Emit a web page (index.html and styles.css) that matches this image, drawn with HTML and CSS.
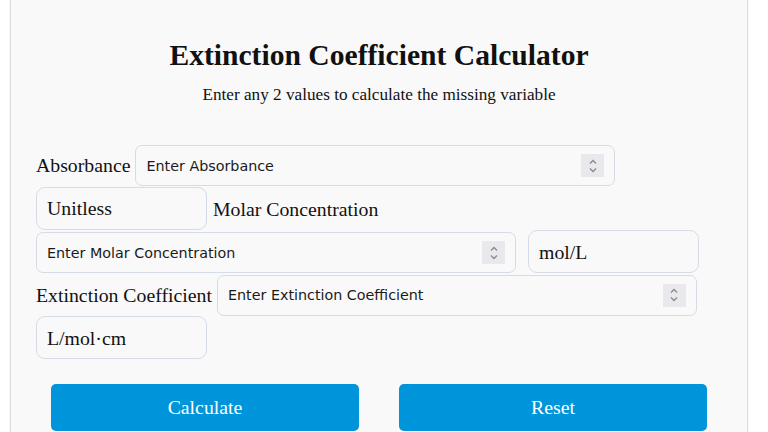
FILE: index.html
```html
<!DOCTYPE html>
<html lang="en">
<head>
  <meta charset="UTF-8">
  <meta name="viewport" content="width=device-width, initial-scale=1.0">
  <title>Extinction Coefficient Calculator</title>
  <link rel="stylesheet" href="styles.css">
</head>
<body>
  <div class="container">
    <h1>Extinction Coefficient Calculator</h1>
    <p class="description">Enter any 2 values to calculate the missing variable</p>

    <div class="form">
      <label for="absorbance">Absorbance</label>
      <span class="field">
        <input type="text" id="absorbance" placeholder="Enter Absorbance">
        <span class="spin">
          <svg width="10" height="16" viewBox="0 0 10 16"><path d="M2 5.5 5 2.5 8 5.5M2 10.5 5 13.5 8 10.5" fill="none" stroke="#8a8a8a" stroke-width="1.3"/></svg>
        </span>
      </span>
      <select class="unit"><option>Unitless</option></select>

      <label for="concentration">Molar Concentration</label>
      <span class="field">
        <input type="text" id="concentration" placeholder="Enter Molar Concentration">
        <span class="spin">
          <svg width="10" height="16" viewBox="0 0 10 16"><path d="M2 5.5 5 2.5 8 5.5M2 10.5 5 13.5 8 10.5" fill="none" stroke="#8a8a8a" stroke-width="1.3"/></svg>
        </span>
      </span>
      <select class="unit unit-wide"><option>mol/L</option></select>

      <label for="coefficient">Extinction Coefficient</label>
      <span class="field">
        <input type="text" id="coefficient" placeholder="Enter Extinction Coefficient">
        <span class="spin">
          <svg width="10" height="16" viewBox="0 0 10 16"><path d="M2 5.5 5 2.5 8 5.5M2 10.5 5 13.5 8 10.5" fill="none" stroke="#8a8a8a" stroke-width="1.3"/></svg>
        </span>
      </span>
      <select class="unit"><option>L/mol·cm</option></select>
    </div>

    <div class="buttons">
      <button class="btn">Calculate</button>
      <button class="btn">Reset</button>
    </div>
  </div>
</body>
</html>
```

FILE: styles.css
```css
:root {
  --card-bg: #f9f9f9;
  --border-color: #d5dce6;
  --accent-blue: #0094da;
  --text-color: #111111;
}

* {
  margin: 0;
  padding: 0;
  box-sizing: border-box;
}

body {
  font-family: 'Liberation Serif', 'Times New Roman', serif;
  background-color: #ffffff;
  color: var(--text-color);
}

.container {
  width: 738px;
  margin-left: 10px;
  min-height: 460px;
  background-color: var(--card-bg);
  border: 1px solid #dcdcdc;
  border-top: none;
  box-shadow: 0 0 2px rgba(0, 0, 0, 0.08);
  padding: 38px 25px 0;
}

h1 {
  font-size: 29.6px;
  font-weight: 700;
  text-align: center;
  line-height: 34px;
}

.description {
  font-size: 17.2px;
  text-align: center;
  margin-top: 13px;
  line-height: 20px;
}

.form {
  display: flex;
  flex-wrap: wrap;
  align-items: flex-end;
  column-gap: 5px;
  row-gap: 0.6px;
  margin-top: 39px;
}

label {
  font-size: 19.8px;
  line-height: 42px;
}

.field {
  display: inline-flex;
  align-items: center;
  width: 480px;
  height: 41px;
  border: 1px solid var(--border-color);
  border-radius: 7px;
  background-color: var(--card-bg);
  padding: 0 10px 0 10px;
}

.field input {
  flex: 1;
  min-width: 0;
  border: none;
  outline: none;
  background: transparent;
  font-family: 'DejaVu Sans', Verdana, sans-serif;
  font-size: 14.3px;
  color: #1a1a1a;
}

.field input::placeholder {
  color: #1a1a1a;
  opacity: 1;
}

.spin {
  display: flex;
  align-items: center;
  justify-content: center;
  width: 23px;
  height: 23px;
  background-color: #e9e9ed;
}

.unit {
  appearance: none;
  -webkit-appearance: none;
  width: 171px;
  height: 43px;
  border: 1px solid var(--border-color);
  border-radius: 9px;
  background-color: var(--card-bg);
  font-family: 'Liberation Serif', 'Times New Roman', serif;
  font-size: 19.8px;
  color: var(--text-color);
  padding: 0 10px;
  margin-right: 1px;
}

.unit-wide {
  margin-left: 7px;
}

.buttons {
  display: flex;
  justify-content: center;
  gap: 40px;
  margin-top: 25px;
}

.btn {
  width: 308px;
  height: 47px;
  border: none;
  border-radius: 5px;
  background-color: var(--accent-blue);
  color: #ffffff;
  font-family: 'Liberation Serif', 'Times New Roman', serif;
  font-size: 19.8px;
  cursor: pointer;
}
```
